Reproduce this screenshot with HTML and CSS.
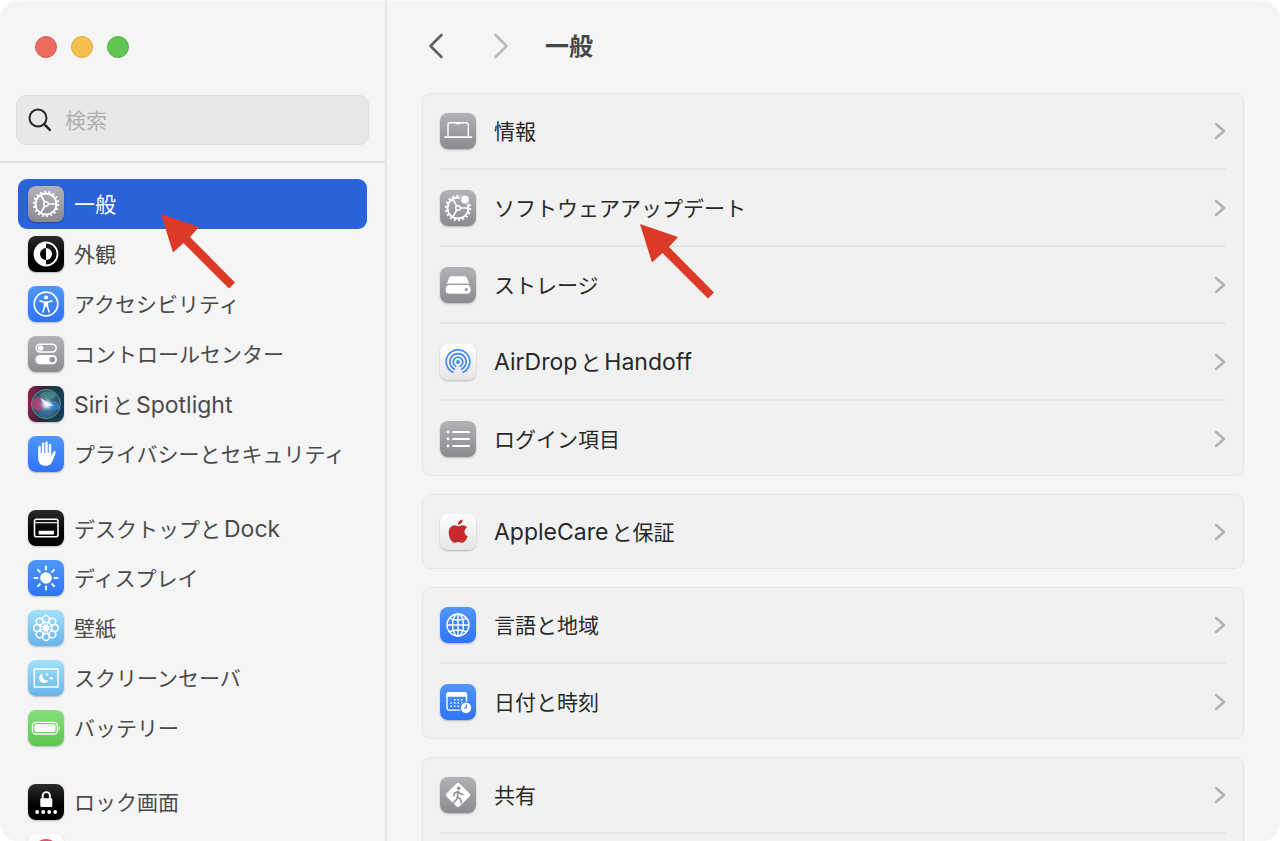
FILE: index.html
```html
<!DOCTYPE html>
<html lang="ja">
<head>
<meta charset="utf-8">
<meta name="viewport" content="width=device-width, initial-scale=1.0">
<title>一般</title>
<link rel="stylesheet" href="styles.css">
</head>
<body>

<!-- Shared shapes -->
<svg class="defs" width="0" height="0" aria-hidden="true">
    <symbol id="gear" viewBox="0 0 36 36">
        <g fill="none" stroke="#fff">
            <circle cx="18" cy="18" r="12.3" stroke-width="1.9" stroke-dasharray="1.9 2.394"/>
            <circle cx="18" cy="18" r="10.5" stroke-width="1.9"/>
            <circle cx="18" cy="18" r="2.3" stroke-width="1.4"/>
            <path d="M20.3 18H28M16.8 16L12.8 9.1M16.8 20L12.8 26.9" stroke-width="1.6"/>
        </g>
    </symbol>
    <symbol id="chevron" viewBox="0 0 12 18">
        <path d="M2 2l8 7-8 7" fill="none" stroke="#b2b2b2" stroke-width="2.4" stroke-linecap="round" stroke-linejoin="round"/>
    </symbol>
    <symbol id="arrow" viewBox="0 0 75 75">
        <path d="M0 0L38 13 29 23 74 68.5 68 74.5 22.5 29 12 38.5z" fill="#dc3a26"/>
    </symbol>
</svg>

<div class="window">
    <aside class="sidebar">
        <div class="sidebar-top">
            <div class="lights">
                <button class="light red" aria-label="閉じる"></button>
                <button class="light yellow" aria-label="しまう"></button>
                <button class="light green" aria-label="拡大"></button>
            </div>
            <div class="search">
                <svg width="24" height="24" viewBox="0 0 24 24" aria-hidden="true">
                    <circle cx="10" cy="10" r="8.5" fill="none" stroke="#262626" stroke-width="2"/>
                    <path d="M16.2 16.2l5.6 5.6" stroke="#262626" stroke-width="2.6" stroke-linecap="round"/>
                </svg>
                <input type="search" placeholder="検索" aria-label="検索">
            </div>
        </div>

        <nav class="menu">
            <div class="menu-group">
                <a href="#" class="menu-item active">
                    <svg class="icon gray" viewBox="0 0 36 36"><use href="#gear"/></svg>
                    <span class="label">一般</span>
                    <svg class="pointer pointer-menu" viewBox="0 0 75 75"><use href="#arrow"/></svg>
                </a>
                <a href="#" class="menu-item">
                    <svg class="icon black" viewBox="0 0 36 36">
                        <circle cx="18" cy="18" r="11.5" fill="none" stroke="#fff" stroke-width="1.8"/>
                        <path d="M18 6.5a11.5 11.5 0 0 0 0 23V24a6 6 0 0 1 0-12z" fill="#fff"/>
                        <path d="M18 12a6 6 0 0 1 0 12z" fill="#fff"/>
                    </svg>
                    <span class="label">外観</span>
                </a>
                <a href="#" class="menu-item">
                    <svg class="icon blue" viewBox="0 0 36 36">
                        <circle cx="18" cy="18" r="11.8" fill="none" stroke="#fff" stroke-width="1.7"/>
                        <circle cx="18" cy="11.6" r="2" fill="#fff"/>
                        <path d="M12 15l4.6 1.2v4.3L14.9 26M24 15l-4.6 1.2v4.3L21.1 26" fill="none" stroke="#fff" stroke-width="1.6" stroke-linecap="round" stroke-linejoin="round"/>
                        <path d="M16 15.6h4V21h-4z" fill="#fff"/>
                    </svg>
                    <span class="label">アクセシビリティ</span>
                </a>
                <a href="#" class="menu-item">
                    <svg class="icon gray" viewBox="0 0 36 36">
                        <rect x="8.2" y="8.2" width="20" height="7.8" rx="3.9" fill="none" stroke="#fff" stroke-width="1.5"/>
                        <circle cx="12.6" cy="12.1" r="2.7" fill="#fff"/>
                        <rect x="7.5" y="19" width="21.4" height="9.3" rx="4.6" fill="#fff"/>
                        <circle cx="24.3" cy="23.6" r="2.9" fill="#96959a"/>
                    </svg>
                    <span class="label">コントロールセンター</span>
                </a>
                <a href="#" class="menu-item">
                    <svg class="icon siri" viewBox="0 0 36 36">
                        <defs>
                            <radialGradient id="siriGlow" cx="0.52" cy="0.52" r="0.5">
                                <stop offset="0" stop-color="#fff"/>
                                <stop offset="0.2" stop-color="#d8ecf8" stop-opacity="0.9"/>
                                <stop offset="0.55" stop-color="#5a9fd0" stop-opacity="0.2"/>
                                <stop offset="1" stop-color="#265a78" stop-opacity="0.1"/>
                            </radialGradient>
                        </defs>
                        <circle cx="18" cy="18" r="14.5" fill="#3a5068" stroke="#4f9c90" stroke-width="1"/>
                        <ellipse cx="11" cy="18" rx="7" ry="7" fill="#d8386e" opacity="0.75"/>
                        <ellipse cx="20" cy="9.5" rx="8" ry="4" fill="#4aa593" opacity="0.6"/>
                        <ellipse cx="25" cy="20" rx="6.5" ry="4.5" fill="#2f86dc" opacity="0.8"/>
                        <ellipse cx="18" cy="27" rx="8" ry="4" fill="#2b7199" opacity="0.7"/>
                        <circle cx="18" cy="18" r="13" fill="url(#siriGlow)"/>
                        <path d="M12 12q5 2 6 4 5 1 8 4-5 0-7-1-5-2-7-7z" fill="#fff" opacity="0.7"/>
                    </svg>
                    <span class="label"><span class="latin">Siri</span><span class="to">と</span><span class="latin">Spotlight</span></span>
                </a>
                <a href="#" class="menu-item">
                    <svg class="icon blue" viewBox="0 0 36 36">
                        <g stroke="#fff" stroke-width="2.5" stroke-linecap="round" fill="none">
                            <path d="M11.5 19.5V11M15 17V7.7M18.5 17V6.8M22 17.5V9"/>
                            <path d="M23.8 21.5l2.7-5.2"/>
                        </g>
                        <path d="M10.3 17h12.9l.2 4 2.6-3.5 1.5.3-3.3 8c-1.2 2.7-3.1 4-6.5 4-5 0-7.4-2.9-7.4-7.3z" fill="#fff"/>
                    </svg>
                    <span class="label">プライバシーとセキュリティ</span>
                </a>
            </div>

            <div class="menu-group">
                <a href="#" class="menu-item">
                    <svg class="icon black" viewBox="0 0 36 36">
                        <rect x="6.5" y="9.3" width="23.5" height="17.5" rx="2" fill="none" stroke="#fff" stroke-width="1.6"/>
                        <path d="M7 12.6h22.5" stroke="#ddd" stroke-width="1.3"/>
                        <path d="M10.6 20.7h15.3v3.8H10.6z" fill="#fff"/>
                    </svg>
                    <span class="label">デスクトップ<span class="to">と</span><span class="latin">Dock</span></span>
                </a>
                <a href="#" class="menu-item">
                    <svg class="icon blue" viewBox="0 0 36 36">
                        <circle cx="18" cy="18" r="5.8" fill="#fff"/>
                        <path d="M18 6.5v3M18 26.5v3M6.5 18h3M26.5 18h3M9.9 9.9l2 2M24.1 24.1l2 2M9.9 26.1l2-2M24.1 11.9l2-2" stroke="#fff" stroke-width="2" stroke-linecap="round"/>
                    </svg>
                    <span class="label">ディスプレイ</span>
                </a>
                <a href="#" class="menu-item">
                    <svg class="icon sky" viewBox="0 0 36 36">
                        <g fill="none" stroke="#fff" stroke-width="1.5">
                            <circle cx="18" cy="9" r="3.4"/>
                            <circle cx="24.4" cy="11.6" r="3.4"/>
                            <circle cx="27" cy="18" r="3.4"/>
                            <circle cx="24.4" cy="24.4" r="3.4"/>
                            <circle cx="18" cy="27" r="3.4"/>
                            <circle cx="11.6" cy="24.4" r="3.4"/>
                            <circle cx="9" cy="18" r="3.4"/>
                            <circle cx="11.6" cy="11.6" r="3.4"/>
                            <circle cx="18" cy="18" r="2.4"/>
                            <path d="M15.3 11l5.4 14M20.7 11l-5.4 14M11 15.3l14 5.4M11 20.7l14-5.4" stroke-width="1.1"/>
                        </g>
                    </svg>
                    <span class="label">壁紙</span>
                </a>
                <a href="#" class="menu-item">
                    <svg class="icon sky" viewBox="0 0 36 36">
                        <rect x="6.3" y="9" width="23.7" height="18" fill="none" stroke="#fff" stroke-width="1.5"/>
                        <path d="M14.5 13.5a4.9 4.9 0 1 0 6 6.7 5 5 0 0 1-6-6.7z" fill="#fff"/>
                        <path d="M19 12.5l.5 1.4 1.4.5-1.4.5-.5 1.4-.5-1.4-1.4-.5 1.4-.5zM23.3 15.7l.7 1.9 1.9.7-1.9.7-.7 1.9-.7-1.9-1.9-.7 1.9-.7z" fill="#fff"/>
                    </svg>
                    <span class="label">スクリーンセーバ</span>
                </a>
                <a href="#" class="menu-item">
                    <svg class="icon green" viewBox="0 0 36 36">
                        <rect x="4.4" y="12.4" width="25" height="11.6" rx="3.5" fill="none" stroke="#fff" stroke-width="1.3"/>
                        <rect x="6.3" y="14.3" width="21.2" height="7.8" rx="2" fill="#fff"/>
                        <path d="M30.8 16v4.4c1.6-.6 1.6-3.8 0-4.4z" fill="#fff"/>
                    </svg>
                    <span class="label">バッテリー</span>
                </a>
            </div>

            <div class="menu-group">
                <a href="#" class="menu-item">
                    <svg class="icon black" viewBox="0 0 36 36">
                        <rect x="12.3" y="14.3" width="12" height="8.8" rx="1.3" fill="#fff"/>
                        <path d="M14.7 15v-3.3a3.6 3.6 0 0 1 7.2 0V15" fill="none" stroke="#fff" stroke-width="1.9"/>
                        <g fill="#fff">
                            <circle cx="9.2" cy="28" r="1.9"/>
                            <circle cx="15.2" cy="28" r="1.9"/>
                            <circle cx="21.2" cy="28" r="1.9"/>
                            <circle cx="27.2" cy="28" r="1.9"/>
                        </g>
                    </svg>
                    <span class="label">ロック画面</span>
                </a>
                <a href="#" class="menu-item" aria-label="Touch ID">
                    <svg class="icon white" viewBox="0 0 36 36">
                        <circle cx="18" cy="18" r="12" fill="none" stroke="#ec4a6c" stroke-width="2"/>
                        <circle cx="18" cy="18" r="8" fill="none" stroke="#ec4a6c" stroke-width="1.5"/>
                    </svg>
                </a>
            </div>
        </nav>
    </aside>

    <main class="content">
        <header class="toolbar">
            <button class="nav-btn" aria-label="戻る">
                <svg width="16" height="26" viewBox="0 0 16 26"><path d="M13.5 2L2.500 13l11 11" fill="none" stroke="#606060" stroke-width="2.6" stroke-linecap="round" stroke-linejoin="round"/></svg>
            </button>
            <button class="nav-btn" aria-label="進む" disabled>
                <svg width="16" height="26" viewBox="0 0 16 26"><path d="M2.5 2l11 11-11 11" fill="none" stroke="#b9b9b9" stroke-width="2.6" stroke-linecap="round" stroke-linejoin="round"/></svg>
            </button>
            <h1 class="label">一般</h1>
        </header>

        <section class="card">
            <a href="#" class="row">
                <svg class="icon gray" viewBox="0 0 36 36">
                    <path d="M8 23V11.500a1.800 1.800 0 0 1 1.800-1.800h16.700a1.800 1.800 0 0 1 1.800 1.800V23" fill="none" stroke="#fff" stroke-width="1.4"/>
                    <path d="M15.500 9.500h5.200v.8q0 1-1 1h-3.200q-1 0-1-1zM4 23.300h28.300v.5q0 1.300-1.500 1.300H5.500Q4 25.100 4 23.800z" fill="#fff"/>
                </svg>
                <span class="label">情報</span>
                <svg class="chevron"><use href="#chevron"/></svg>
            </a>
            <a href="#" class="row">
                <svg class="icon gray" viewBox="0 0 36 36">
                    <use href="#gear"/>
                    <circle cx="25" cy="9.5" r="5.4" fill="#a9a8ad"/>
                    <circle cx="25" cy="9.5" r="3.9" fill="#fff"/>
                </svg>
                <span class="label">ソフトウェアアップデート</span>
                <svg class="chevron"><use href="#chevron"/></svg>
                <svg class="pointer pointer-row" viewBox="0 0 75 75"><use href="#arrow"/></svg>
            </a>
            <a href="#" class="row">
                <svg class="icon gray" viewBox="0 0 36 36">
                    <path d="M11.500 9.300h13q1.500 0 2.200 1.300l2.500 6.400q-1-.4-2.300-.4H9.100q-1.300 0-2.300.4l2.500-6.400q.7-1.300 2.200-1.300z" fill="#fff"/>
                    <rect x="5.8" y="18" width="24.8" height="8.8" rx="3.8" fill="#fff"/>
                    <circle cx="26.2" cy="22.4" r="1.5" fill="#929196"/>
                </svg>
                <span class="label">ストレージ</span>
                <svg class="chevron"><use href="#chevron"/></svg>
            </a>
            <a href="#" class="row">
                <svg class="icon white" viewBox="0 0 36 36">
                    <circle cx="18" cy="18" r="1.9" fill="#3f86f7"/>
                    <g fill="none" stroke="#3f86f7" stroke-width="1.6" stroke-linecap="round">
                        <path d="M15.700 22.200a4.800 4.800 0 1 1 4.600 0"/>
                        <path d="M14.500 25.200a8.200 8.200 0 1 1 7 0"/>
                        <path d="M12.900 28.300a11.800 11.800 0 1 1 10.200 0"/>
                    </g>
                </svg>
                <span class="label"><span class="latin">AirDrop</span><span class="to">と</span><span class="latin">Handoff</span></span>
                <svg class="chevron"><use href="#chevron"/></svg>
            </a>
            <a href="#" class="row">
                <svg class="icon gray" viewBox="0 0 36 36">
                    <path d="M13 11h16M13 18h16M13 25h16" stroke="#fff" stroke-width="1.8" stroke-linecap="round"/>
                    <g fill="#fff">
                        <circle cx="8" cy="11" r="1.4"/>
                        <circle cx="8" cy="18" r="1.4"/>
                        <circle cx="8" cy="25" r="1.4"/>
                    </g>
                </svg>
                <span class="label">ログイン項目</span>
                <svg class="chevron"><use href="#chevron"/></svg>
            </a>
        </section>

        <section class="card">
            <a href="#" class="row">
                <svg class="icon white" viewBox="0 0 36 36">
                    <path d="M18.200 12.300c1.300 0 2.500-1 4.500-1 1.700 0 3.300.8 4.300 2.300-3.700 2.200-3.200 7.200.7 8.700-.9 2.500-2.900 6.500-5.400 6.500-1.500 0-2.100-.9-4-.9s-2.600.9-4 .9c-2.600 0-5.600-5.300-5.600-10 0-4.600 3-7.500 5.900-7.500 1.800 0 2.600 1 3.600 1z" fill="#c6292c"/>
                    <path d="M18 10.700c-.2-2.600 1.900-5 4.500-5.300.4 2.700-1.900 5.300-4.500 5.300z" fill="#c6292c"/>
                </svg>
                <span class="label"><span class="latin">AppleCare</span><span class="to">と</span>保証</span>
                <svg class="chevron"><use href="#chevron"/></svg>
            </a>
        </section>

        <section class="card">
            <a href="#" class="row">
                <svg class="icon blue" viewBox="0 0 36 36">
                    <g fill="none" stroke="#fff" stroke-width="1.4">
                        <circle cx="18" cy="18" r="11"/>
                        <ellipse cx="18" cy="18" rx="5.5" ry="11"/>
                        <path d="M18 7v22M7 18h22M9.500 11.300q8.500 3.400 17 0M9.500 24.700q8.500-3.400 17 0"/>
                    </g>
                </svg>
                <span class="label">言語と地域</span>
                <svg class="chevron"><use href="#chevron"/></svg>
            </a>
            <a href="#" class="row">
                <svg class="icon blue" viewBox="0 0 36 36">
                    <rect x="7" y="8.6" width="19.5" height="17.5" rx="2.3" fill="none" stroke="#fff" stroke-width="1.4"/>
                    <path d="M6.500 12.700v-2.200q0-2.500 2.500-2.500h15.500q2.500 0 2.500 2.500v2.200z" fill="#fff"/>
                    <path d="M14 15.700h9.700M10.500 19h13.200M10.500 22.300h9.900" stroke="#fff" stroke-width="1.5" stroke-dasharray="1.5 2"/>
                    <circle cx="26" cy="23.7" r="6.3" fill="#3b80f7"/>
                    <circle cx="26" cy="23.7" r="5.2" fill="#fff"/>
                    <path d="M26.300 20.500v3.500h-2.500" fill="none" stroke="#3b80f7" stroke-width="1.2"/>
                </svg>
                <span class="label">日付と時刻</span>
                <svg class="chevron"><use href="#chevron"/></svg>
            </a>
        </section>

        <section class="card">
            <a href="#" class="row">
                <svg class="icon gray" viewBox="0 0 36 36">
                    <rect x="8.8" y="8.8" width="18.4" height="18.4" rx="2" transform="rotate(45 18 18)" fill="#fff"/>
                    <circle cx="18.7" cy="11.3" r="1.7" fill="#929196"/>
                    <path d="M18 14.500l-.5 5.500 3 2.200.8 3.500M17.300 20l-1 2.800-2.600 3M17.500 14.700l-3 1.500-.7 2.800M18.600 14.700l1.800 2 2.500.7" fill="none" stroke="#929196" stroke-width="1.6" stroke-linecap="round" stroke-linejoin="round"/>
                </svg>
                <span class="label">共有</span>
                <svg class="chevron"><use href="#chevron"/></svg>
            </a>
            <a href="#" class="row" aria-label="Time Machine"></a>
        </section>
    </main>
</div>

</body>
</html>
```
FILE: styles.css
```css
* {
    box-sizing: border-box;
}
body {
    margin: 0;
    background: #fff;
    font-family: Inter, "Noto Sans CJK JP", sans-serif;
    font-size: 21px;
    line-height: 30px;
    color: #282828;
}
a {
    color: inherit;
    text-decoration: none;
}
button {
    padding: 0;
    border: none;
    background: none;
}
.defs {
    position: absolute;
}
.window {
    display: flex;
    height: 100vh;
    overflow: hidden;
    background: #f5f5f5;
    border-radius: 18px;
    box-shadow: inset 0 1px #fbfbfb;
}

/* Sidebar */
.sidebar {
    flex: none;
    width: 387px;
    border-right: 2px solid #e4e4e4;
    color: #4a4a4a;
}
.sidebar-top {
    padding: 36px 16px 16px;
    border-bottom: 2px solid #dfdfdf;
}
.lights {
    display: flex;
    gap: 14px;
    padding-left: 19px;
    margin-bottom: 37px;
}
.light {
    width: 22px;
    height: 22px;
    border-radius: 50%;
}
.light.red {
    background: #ec6a5e;
    border: 1px solid #dc5a50;
}
.light.yellow {
    background: #f4bf4f;
    border: 1px solid #e0aa3c;
}
.light.green {
    background: #61c554;
    border: 1px solid #51b343;
}
.search {
    display: flex;
    align-items: center;
    gap: 13px;
    height: 50px;
    padding: 0 11px;
    background: #e8e8e8;
    border: 1px solid #dedede;
    border-radius: 10px;
}
.search svg {
    flex: none;
}
.search input {
    flex: 1;
    min-width: 0;
    padding: 2px 0 0;
    border: none;
    outline: none;
    background: none;
    font: inherit;
    color: #282828;
}
.search input::placeholder {
    color: #b0b0b0;
}
.menu {
    display: flex;
    flex-direction: column;
    gap: 24px;
    padding: 16px 18px;
}
.menu-item {
    position: relative;
    display: flex;
    align-items: center;
    gap: 10px;
    height: 50px;
    padding: 0 10px;
    border-radius: 9px;
    white-space: nowrap;
}
.menu-item.active {
    background: #2962d9;
    color: #fff;
}
.label {
    flex: 1;
    padding-top: 2px;
}
.latin {
    font-size: 23px;
}
.latin + .to {
    margin-left: 3px;
}
.to:has(+ .latin) {
    margin-right: 3px;
}

/* Icons */
.icon {
    flex: none;
    width: 36px;
    height: 36px;
    border-radius: 8px;
    box-shadow: 0 1px 2px rgba(0, 0, 0, 0.25);
}
.gray {
    background: linear-gradient(#b3b2b7, #8b8a8f);
}
.black {
    background: linear-gradient(#2c2c2c, #000 60%);
}
.blue {
    background: linear-gradient(#4f97f9, #2f73f6);
}
.sky {
    background: linear-gradient(#a2e1fa, #69b3ea);
}
.green {
    background: linear-gradient(#86df7c, #5cc64e);
}
.white {
    background: linear-gradient(#fefefe, #e5e5e5);
}
.siri {
    background: linear-gradient(100deg, #9c1f48, #38203c 40%, #173f42 65%, #123a68);
}

/* Red pointers, drawn over the rows */
.pointer {
    position: absolute;
    z-index: 1;
    width: 75px;
    height: 75px;
    pointer-events: none;
}
.pointer-menu {
    left: 143px;
    top: 35px;
}
.pointer-row {
    left: 200px;
    top: 54px;
}

/* Content */
.content {
    flex: 1;
    min-width: 0;
    display: flex;
    flex-direction: column;
    gap: 18px;
    padding: 0 36px 0 35px;
}
.toolbar {
    flex: none;
    display: flex;
    align-items: center;
    height: 75px;
    padding: 16px 6px 0;
}
.nav-btn {
    display: flex;
    margin-right: 49px;
}
.nav-btn:disabled {
    margin-right: 36px;
}
h1 {
    margin: 0;
    font-size: 24px;
    font-weight: 700;
    color: #464646;
}
.card {
    flex: none;
    padding: 0 18px;
    background: #f1f1f1;
    border-radius: 9px;
    box-shadow: inset 0 0 0 1px #e5e5e5;
}
.row {
    position: relative;
    display: flex;
    align-items: center;
    gap: 18px;
    height: 75px;
}
.row + .row {
    height: 77px;
    border-top: 2px solid #e6e6e6;
}
.chevron {
    width: 12px;
    height: 18px;
}
```
